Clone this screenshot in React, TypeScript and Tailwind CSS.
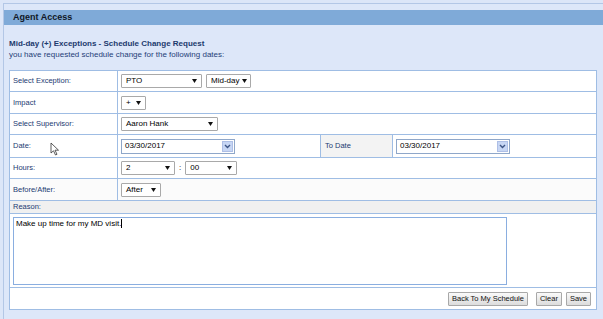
import React from "react";

const font = { fontFamily: '"Liberation Sans", Arial, sans-serif' };

function Arrow() {
  return (
    <svg width="5" height="4" viewBox="0 0 5 4" className="shrink-0">
      <path d="M0 0 L5 0 L2.5 4 Z" fill="#111" />
    </svg>
  );
}

function Select({ w, value }: { w: string; value: string }) {
  return (
    <div
      className={`${w} h-[14px] border border-[#a9a9a9] bg-white flex items-center justify-between pl-[4px] pr-[4px] text-[8px] text-black rounded-[1px] whitespace-nowrap`}
    >
      <span className="mr-[3px]">{value}</span>
      <Arrow />
    </div>
  );
}

function DateInput() {
  return (
    <div className="w-[114px] h-[15px] border border-[#8fa7c9] bg-white flex items-center justify-between pl-[3px] pr-px text-[8px] text-black">
      <span>03/30/2017</span>
      <div className="w-[11px] h-[11px] bg-[#c7d6f4] border border-[#aebfe6] flex items-center justify-center">
        <svg width="7" height="5" viewBox="0 0 7 5">
          <path d="M1 1 L3.5 3.5 L6 1" stroke="#3d5585" strokeWidth="1.4" fill="none" />
        </svg>
      </div>
    </div>
  );
}

function Btn({ children }: { children: React.ReactNode }) {
  return (
    <div className="h-[14px] px-[3px] border border-[#a8a8a8] bg-gradient-to-b from-[#fafafa] to-[#dcdcdc] flex items-center text-[7.5px] text-[#111] rounded-[1px] whitespace-nowrap">
      {children}
    </div>
  );
}

function Row({
  label,
  h,
  children,
  bg = "bg-white",
}: {
  label: string;
  h: string;
  children?: React.ReactNode;
  bg?: string;
}) {
  return (
    <div className={`flex ${h} border-b border-[#9fbde4] ${bg}`}>
      <div className="w-[108px] shrink-0 border-r border-[#9fbde4] flex items-center pl-[3px] text-[7.5px] text-[#1c3a72]">
        {label}
      </div>
      <div className="flex-1 flex items-center pl-[3px] gap-[4px]">{children}</div>
    </div>
  );
}

export default function App() {
  return (
    <div className="w-[603px] h-[319px] bg-[#dce6f8] pt-[3px] overflow-hidden relative" style={font}>
      <div className="ml-[3px] h-[316px] border-t border-l border-[#b3c7e6] bg-[#dde7f9] pt-[6px]">
        <div className="h-[15px] bg-[#7faad8] flex items-center pl-[9px] text-[9px] font-bold text-[#111827]">
          Agent Access
        </div>
        <div className="pl-[5px] pr-[6px]">
          <div className="mt-[14px] text-[8px] font-bold text-[#1c3a6e] leading-[10px]">
            Mid-day (+) Exceptions - Schedule Change Request
          </div>
          <div className="mt-[1px] text-[8px] text-[#1f3e78] leading-[10px]">
            you have requested schedule change for the following dates:
          </div>
          <div className="mt-[10px] w-[588px] border border-[#9fbde4] bg-white">
            <Row label="Select Exception:" h="h-[21px]">
              <Select w="w-[81px]" value="PTO" />
              <Select w="w-[45px]" value="Mid-day" />
            </Row>
            <Row label="Impact" h="h-[22px]">
              <Select w="w-[25px]" value="+" />
            </Row>
            <Row label="Select Supervisor:" h="h-[21px]">
              <Select w="w-[97px]" value="Aaron Hank" />
            </Row>
            <div className="flex h-[23px] border-b border-[#9fbde4]">
              <div className="w-[108px] shrink-0 border-r border-[#9fbde4] flex items-center pl-[3px] text-[7.5px] text-[#1c3a72]">
                Date:
              </div>
              <div className="w-[203px] shrink-0 border-r border-[#9fbde4] flex items-center pl-[3px]">
                <DateInput />
              </div>
              <div className="w-[72px] shrink-0 border-r border-[#9fbde4] bg-[#f3f3f3] flex items-center pl-[4px] text-[7.5px] text-[#1c3a72]">
                To Date
              </div>
              <div className="flex-1 flex items-center pl-[3px]">
                <DateInput />
              </div>
            </div>
            <Row label="Hours:" h="h-[21px]">
              <Select w="w-[54px]" value="2" />
              <span className="text-[8px] text-black">:</span>
              <Select w="w-[52px]" value="00" />
            </Row>
            <Row label="Before/After:" h="h-[22px]" bg="bg-[#fbfbfb]">
              <Select w="w-[40px]" value="After" />
            </Row>
            <div className="h-[13px] border-b border-[#9fbde4] bg-[#f0f0f0] flex items-center pl-[3px] text-[7.5px] text-[#1c3a72]">
              Reason:
            </div>
            <div className="h-[74px] border-b border-[#9fbde4] pl-[3px] pt-[3px]">
              <div className="w-[494px] h-[68px] border border-[#8aaee0] bg-white pl-[2px] pt-[1px] text-[8px] text-black leading-[10px]">
                Make up time for my MD visit.<span className="inline-block w-px h-[9px] bg-black align-middle" />
              </div>
            </div>
            <div className="h-[21px] flex items-center justify-end gap-[4px] pr-[5px]">
              <div className="mr-[4px]">
                <Btn>Back To My Schedule</Btn>
              </div>
              <Btn>Clear</Btn>
              <Btn>Save</Btn>
            </div>
          </div>
        </div>
      </div>
      <svg className="absolute left-[50px] top-[142px]" width="10" height="14" viewBox="0 0 10 14">
        <path d="M1 1 L1 11 L3.5 8.8 L5.5 13 L7 12.3 L5 8.2 L8.5 8.2 Z" fill="white" stroke="#333" strokeWidth="0.8" />
      </svg>
    </div>
  );
}
